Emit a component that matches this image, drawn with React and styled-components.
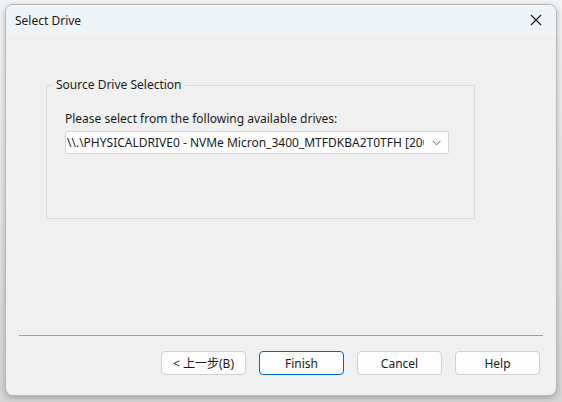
import React from "react";
import styled, { createGlobalStyle } from "styled-components";

const GlobalStyle = createGlobalStyle`
  html, body {
    margin: 0;
    padding: 0;
    background: #e4e4e4;
  }
  body {
    font-family: "Noto Sans", "Noto Sans CJK TC", sans-serif;
    font-size: 12px;
    color: #000;
  }
`;

const Desk = styled.div`
  width: 562px;
  height: 402px;
  box-sizing: border-box;
  padding: 4px 5px 6px 5px;
  background: linear-gradient(#f4f4f4, #d6d6d6);
`;

const Window = styled.div`
  width: 552px;
  height: 392px;
  box-sizing: border-box;
  display: flex;
  flex-direction: column;
  background: #f0f0f0;
  border: 1px solid #b9b9b9;
  border-radius: 8px;
  overflow: hidden;
  box-shadow: 0 2px 6px rgba(0, 0, 0, 0.25);
`;

const TitleBar = styled.div`
  height: 30px;
  flex: none;
  display: flex;
  align-items: center;
  justify-content: space-between;
  padding: 0 9px 0 9px;
  background: #eff4f9;
`;

const Title = styled.span`
  font-size: 12px;
  color: #1a1a1a;
`;

const CloseButton = styled.div`
  width: 16px;
  height: 16px;
  display: flex;
  align-items: center;
  justify-content: center;
  margin-right: 3px;
`;

const Body = styled.div`
  flex: 1;
  display: flex;
  flex-direction: column;
  padding: 50px 0 0 0;
`;

const Group = styled.fieldset`
  margin: 0 0 0 40px;
  width: 429px;
  height: 134px;
  box-sizing: border-box;
  border: 1px solid #dcdcdc;
  padding: 18px 0 0 18px;
  position: relative;
  min-width: 0;
`;

const Legend = styled.legend`
  position: absolute;
  top: -9px;
  left: 6px;
  padding: 0 3px;
  background: #f0f0f0;
  line-height: 16px;
  color: #1a1a1a;
`;

const FieldLabel = styled.div`
  line-height: 16px;
  margin: 7px 0 4px 0;
  color: #1a1a1a;
`;

const Combo = styled.div`
  width: 384px;
  height: 23px;
  box-sizing: border-box;
  display: flex;
  align-items: center;
  background: #fff;
  border: 1px solid #d6d6d6;
  border-radius: 2px;
  padding: 0 4px 0 1px;
`;

const ComboText = styled.span`
  flex: 1;
  white-space: nowrap;
  overflow: hidden;
  color: #1a1a1a;
`;

const Chevron = styled.span`
  width: 16px;
  display: flex;
  justify-content: center;
  margin-left: 4px;
`;

const Spacer = styled.div`
  flex: 1;
`;

const Separator = styled.div`
  height: 1px;
  margin: 0 13px;
  background: #a0a0a0;
`;

const ButtonRow = styled.div`
  display: flex;
  justify-content: flex-end;
  gap: 13px;
  padding: 15px 16px 20px 0;
`;

const Button = styled.button`
  width: 85px;
  height: 24px;
  box-sizing: border-box;
  font-family: "Noto Sans", "Noto Sans CJK TC", sans-serif;
  font-size: 12px;
  color: #1a1a1a;
  background: #fdfdfd;
  border: 1px solid ${(p) => (p.$primary ? "#0067c0" : "#d0d0d0")};
  border-radius: 4px;
  padding: 0;
`;

export default function App() {
  return (
    <>
      <GlobalStyle />
      <Desk>
        <Window>
          <TitleBar>
            <Title>Select Drive</Title>
            <CloseButton>
              <svg width="12" height="12" viewBox="0 0 12 12">
                <path d="M1 1 L11 11 M11 1 L1 11" stroke="#1a1a1a" strokeWidth="1.1" />
              </svg>
            </CloseButton>
          </TitleBar>
          <Body>
            <Group>
              <Legend>Source Drive Selection</Legend>
              <FieldLabel>Please select from the following available drives:</FieldLabel>
              <Combo>
                <ComboText>\\.\PHYSICALDRIVE0 - NVMe Micron_3400_MTFDKBA2T0TFH [2000 GB]</ComboText>
                <Chevron>
                  <svg width="9" height="6" viewBox="0 0 9 6">
                    <path d="M0.5 0.8 L4.5 4.8 L8.5 0.8" stroke="#606060" fill="none" strokeWidth="1" />
                  </svg>
                </Chevron>
              </Combo>
            </Group>
            <Spacer />
            <Separator />
            <ButtonRow>
              <Button>&lt; 上一步(B)</Button>
              <Button $primary>Finish</Button>
              <Button>Cancel</Button>
              <Button>Help</Button>
            </ButtonRow>
          </Body>
        </Window>
      </Desk>
    </>
  );
}
